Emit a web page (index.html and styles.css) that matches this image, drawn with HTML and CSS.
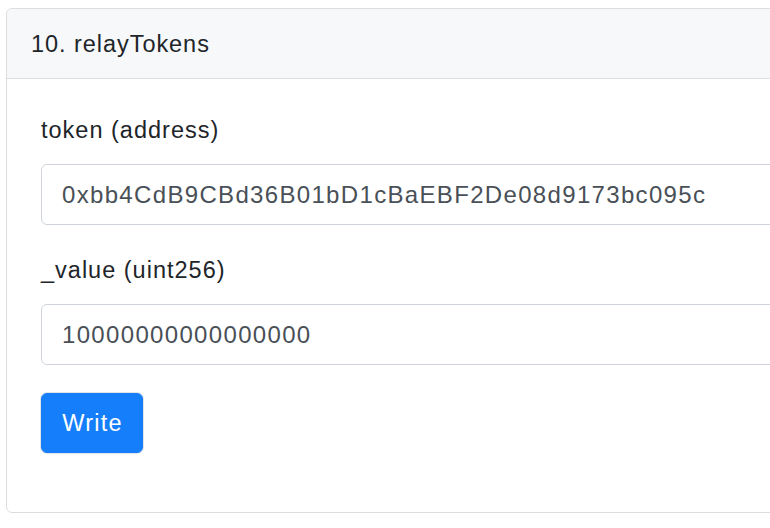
FILE: index.html
```html
<!DOCTYPE html>
<html>
<head>
<meta charset="utf-8">
<link rel="stylesheet" href="styles.css">
</head>
<body>
<div class="card">
  <div class="card-header">10. relayTokens</div>
  <div class="card-body">
    <div class="form-group">
      <label class="label">token (address)</label>
      <input class="input" type="text" value="0xbb4CdB9CBd36B01bD1cBaEBF2De08d9173bc095c">
    </div>
    <div class="form-group">
      <label class="label">_value (uint256)</label>
      <input class="input" type="text" value="10000000000000000">
    </div>
    <button class="btn">Write</button>
  </div>
</div>
</body>
</html>
```
FILE: styles.css
```css
html, body {
  margin: 0;
  padding: 0;
  background: #fff;
  overflow: hidden;
}
body {
  font-family: "Liberation Sans", Arial, sans-serif;
  color: #212529;
  width: 770px;
  height: 528px;
}
.card {
  margin: 8px 0 0 6px;
  width: 820px;
  border: 1px solid #dcdde0;
  border-radius: 6px;
  box-sizing: border-box;
  height: 505px;
}
.card-header {
  background: #f7f8fa;
  border-bottom: 1px solid #dcdde0;
  height: 70px;
  box-sizing: border-box;
  padding: 2px 0 0 24px;
  display: flex;
  align-items: center;
  font-size: 23.5px;
  letter-spacing: 0.95px;
  border-radius: 6px 6px 0 0;
}
.card-body {
  padding: 35px 34px 0 34px;
}
.form-group {
  display: flex;
  flex-direction: column;
  margin-bottom: 29px;
}
.label {
  font-size: 23.5px;
  letter-spacing: 1px;
  line-height: 33px;
  margin-bottom: 17px;
}
.input {
  height: 61px;
  box-sizing: border-box;
  border: 1px solid #ced4da;
  border-radius: 6px;
  padding: 0 20px;
  font-family: "Liberation Sans", Arial, sans-serif;
  font-size: 24px;
  letter-spacing: 1.33px;
  color: #495057;
  width: 760px;
  outline: none;
}
.form-group:nth-child(2) {
  margin-bottom: 28px;
}
.btn {
  display: block;
  width: 102px;
  height: 60px;
  background: #157efb;
  color: #fff;
  border: 1px solid #157efb;
  border-radius: 6px;
  box-shadow: 0 0 0 1px #e2e4e8;
  font-family: "Liberation Sans", Arial, sans-serif;
  font-size: 23.5px;
  letter-spacing: 1.2px;
  padding: 0 0 0 1px;
}
```
